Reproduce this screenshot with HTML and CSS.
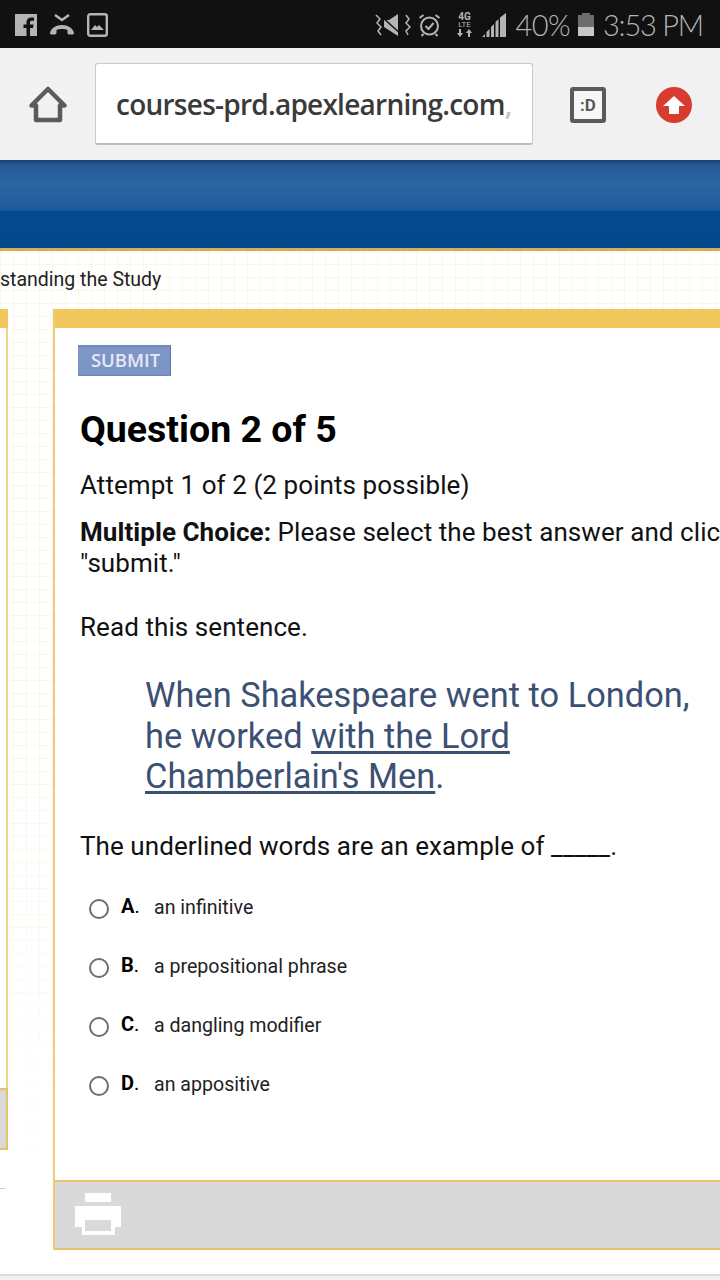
FILE: index.html
```html
<!DOCTYPE html>
<html>
  <head>
    <meta charset="utf-8">
    <title>Question 2 of 5</title>
    <link rel="stylesheet" href="styles.css">
  </head>
  <body>
    <div class="status-bar">
      <div class="status-left">
        <svg width="22" height="22" viewBox="0 0 22 22"><path fill="#b4b4b4" d="M0 0h22v22h-7v-8h3l.5-3.500H15V8.500c0-1 .5-1.700 1.800-1.700H19V3.600c-.5-.1-1.600-.2-2.800-.2-2.700 0-4.700 1.700-4.700 4.700v2.400H8.500V14h3v8H0z"/></svg>
        <svg width="24" height="22" viewBox="0 0 24 22"><path fill="none" stroke="#b4b4b4" stroke-width="2.500" d="M5 1l7 5 7-5"/><path fill="#b4b4b4" d="M0 19c1-5 6-8 12-8s11 3 12 8c0 1-1 1.500-2 1.500h-3c-1 0-1.500-1-1.500-2V16c-1.500-.8-3.500-1-5.500-1s-4 .2-5.500 1v2.500c0 1-.5 2-1.500 2H2c-1 0-2-.5-2-1.500z"/></svg>
        <svg class="gallery" width="21" height="24" viewBox="0 0 21 24"><rect x="1.200" y="1.200" width="18.600" height="21.600" rx="2" fill="none" stroke="#b4b4b4" stroke-width="2.400"/><path fill="#b4b4b4" d="M4 17l4-5 2 2 2-2 5 5z"/></svg>
      </div>
      <div class="status-right">
        <svg width="36" height="24" viewBox="0 0 36 24"><path fill="#b4b4b4" d="M9 7h5l9-6v22L9 14z"/><path stroke="#111" stroke-width="1.500" d="M7 4l20 18"/><path fill="none" stroke="#b4b4b4" stroke-width="1.500" d="M1 2l4 4-3 4 4 4-3 4 3 4M31 2l3 4-3 4 4 4-4 4 2 4"/></svg>
        <svg class="alarm" width="23" height="24" viewBox="0 0 22 24"><circle cx="11" cy="13" r="8.500" fill="none" stroke="#b4b4b4" stroke-width="2"/><path fill="none" stroke="#b4b4b4" stroke-width="2" d="M7 13l3 3 5-6M1 5l4-3M21 5l-4-3M5 21l-2 2M17 21l2 2"/></svg>
        <div class="net-type"><b>4G</b><b class="lte">LTE</b><svg width="15" height="8" viewBox="0 0 15 8"><path fill="#b4b4b4" d="M2 0h2v4h2L3 8 0 4h2zM11 8h2V4h2l-3-4-3 4h2z"/></svg></div>
        <svg class="signal" width="24" height="24" viewBox="0 0 24 24"><path fill="#b4b4b4" d="M0 24l3-3v3zM4.500 24v-5l3-3v8zM9 24V14l3-3v13zM13.500 24V9l3-3v18zM18 24V4.500L24 0v24z"/></svg>
        <span class="percent">40%</span>
        <div class="battery"><i></i></div>
        <span class="clock">3:53 PM</span>
      </div>
    </div>

    <div class="toolbar">
      <svg class="home" width="38" height="38" viewBox="0 0 38 38"><path fill="none" stroke="#5b5b5b" stroke-width="4.500" stroke-linejoin="round" d="M2.500 19.500L19 3l16.500 16.500H31V34H7V19.500z"/></svg>
      <div class="url-box"><span>courses-prd.apexlearning.com<em>,</em></span></div>
      <div class="reader">:D</div>
      <div class="upload"><svg width="24" height="24" viewBox="0 0 24 24"><path fill="#fff" d="M12 3l11 10h-6v8H7v-8H1z"/></svg></div>
    </div>

    <div class="banner"></div>

    <div class="page">
      <div class="crumb">standing the Study</div>
      <div class="columns">
        <div class="side">
          <div class="side-top"></div>
          <div class="side-body"></div>
          <div class="side-foot"></div>
          <div class="side-mark"></div>
        </div>
        <div class="main">
          <div class="main-top"></div>
          <div class="content">
            <div class="submit">SUBMIT</div>
            <h1>Question 2 of 5</h1>
            <p class="attempt">Attempt 1 of 2 (2 points possible)</p>
            <p class="prompt"><b>Multiple Choice:</b> Please select the best answer and click<br>"submit."</p>
            <p class="read">Read this sentence.</p>
            <p class="quote">When Shakespeare went to London,<br>he worked <u>with the Lord<br>Chamberlain's Men</u>.</p>
            <p class="ask">The underlined words are an example of _____.</p>
            <ul class="options">
              <li><i class="radio"></i><b>A<em>.</em></b><span>an infinitive</span></li>
              <li><i class="radio"></i><b>B<em>.</em></b><span>a prepositional phrase</span></li>
              <li><i class="radio"></i><b>C<em>.</em></b><span>a dangling modifier</span></li>
              <li><i class="radio"></i><b>D<em>.</em></b><span>an appositive</span></li>
            </ul>
          </div>
          <div class="main-foot">
            <svg width="46" height="42" viewBox="0 0 46 42"><path fill="#fff" d="M10 0h26v9H10zM0 13h46v21h-6v8H7v-8H0z"/><path fill="#d9d9d9" d="M10 27h26v11H10z"/></svg>
          </div>
        </div>
      </div>
      <div class="page-end"></div>
    </div>
  </body>
</html>
```

FILE: styles.css
```css
* {margin: 0; padding: 0; box-sizing: border-box;}
ul {list-style: none;}
html, body {height: 100%;}
body {
  width: 720px;
  height: 1280px;
  overflow: hidden;
  font-family: Roboto, "Liberation Sans", sans-serif;
  background: #fff;
  color: #111;
}

/* status bar */
.status-bar {
  height: 48px;
  background: #111;
  color: #b4b4b4;
  display: flex;
  align-items: center;
  justify-content: space-between;
  padding: 1px 17px 0 15px;
}
.status-left {display: flex; align-items: center; gap: 13px;}
.status-right {display: flex; align-items: center;}
.alarm {margin-left: 7px;}
.net-type {
  width: 16px;
  margin-left: 16px;
  font-size: 10px;
  line-height: 8px;
  text-align: center;
  display: flex;
  flex-direction: column;
  align-items: center;
}
.net-type .lte {font-size: 8px; font-weight: 400;}
.signal {margin-left: 9px;}
.percent {font: 300 29px/1 Lato, sans-serif; margin-left: 10px; letter-spacing: -.6px;}
.battery {
  width: 16px;
  height: 21px;
  margin: 2px 0 0 8px;
  background: #6d6d6d;
  position: relative;
}
.battery::before {content: ""; position: absolute; left: 4px; top: -2px; width: 8px; height: 2px; background: #6d6d6d;}
.battery i {position: absolute; left: 0; right: 0; bottom: 0; height: 9px; background: #c8c8c8;}
.clock {font: 300 29px/1 Lato, sans-serif; margin-left: 9px; letter-spacing: -1.200px;}

/* browser toolbar */
.toolbar {
  height: 112px;
  background: #f1f1f1;
  display: flex;
  align-items: center;
  padding: 0 28px 0 29px;
}
.home {flex: none; margin-top: 2px;}
.url-box {
  width: 438px;
  height: 82px;
  margin: 0 0 0 28px;
  background: #fff;
  border: 1px solid #c9c9c9;
  border-bottom: 2px solid #bdbdbd;
  border-radius: 3px;
  display: flex;
  align-items: center;
  padding: 0 19px 0 20px;
  overflow: hidden;
}
.url-box span {
  font: 600 28px/1 "Open Sans", sans-serif;
  letter-spacing: -.75px;
  color: #3a3a3a;
  white-space: nowrap;
}
.url-box em {font-style: normal; color: #c4c4c4;}
.reader {
  width: 36px;
  height: 36px;
  margin: 2px 0 0 37px;
  border: 4px solid #5b5b5b;
  border-radius: 3px;
  background: #f7f7f7;
  color: #5b5b5b;
  font: 700 17px/28px Roboto, sans-serif;
  text-align: center;
}
.upload {
  width: 36px;
  height: 36px;
  margin: 2px 0 0 50px;
  border-radius: 50%;
  background: #d83c2e;
  display: flex;
  align-items: center;
  justify-content: center;
}

/* blue site banner */
.banner {
  height: 91px;
  border-bottom: 3px solid #cfae58;
  background: linear-gradient(to bottom, #183f70 0, #245a94 5px, #2b66a2 24px, #1f5b9b 50px, #044a90 51px, #03478c 86px);
}

/* page with graph paper background, it fades out towards the bottom */
.page {
  height: 1029px;
  background-color: #fff;
  background-image:
    linear-gradient(to bottom, rgba(255,255,255,0) 50%, #fff 95%),
    linear-gradient(to right, #fcf6e6 1px, transparent 1px),
    linear-gradient(to bottom, #fcf6e6 1px, transparent 1px);
  background-size: 100% 100%, 13px 13px, 13px 13px;
  display: flex;
  flex-direction: column;
}
.crumb {
  height: 58px;
  padding-top: 17px;
  font-size: 19.500px;
  line-height: 24px;
  color: #222;
}
.columns {display: flex; height: 941px; gap: 45px;}

.side {width: 8px; flex: none; display: flex; flex-direction: column;}
.side-top {height: 19px; background: #f2c75c;}
.side-body {height: 760px; border-right: 2px solid #efd58c; background: #fff;}
.side-foot {height: 62px; background: #d9d9d9; border: 2px solid #e5c26c; border-left: 0;}
.side-mark {width: 5px; height: 1px; margin-top: 38px; background: #ccc;}

.main {
  flex: 1;
  min-width: 0;
  overflow: hidden;
  display: flex;
  flex-direction: column;
  background: #fff;
  border-left: 2px solid #eccb74;
}
.main-top {height: 19px; flex: none; background: #f2c75c; margin-left: -2px;}
.content {flex: 1; padding: 17px 0 0 25px; white-space: nowrap;}

.submit {
  width: 93px;
  height: 31px;
  margin-left: -2px;
  padding-left: 3px;
  background: linear-gradient(to bottom, #6f89bb 0, #7e96c8 4px, #7b94c6 100%);
  border-right: 1px solid #5f7aa8;
  border-bottom: 1px solid #6c86b4;
  color: #e4e9f3;
  font: 600 18.500px/29px "Open Sans", sans-serif;
  text-align: center;
}
h1 {font-size: 37.500px; line-height: 44px; font-weight: 700; color: #000; margin-top: 31px;}
.attempt, .prompt, .read, .ask {font-size: 26px; line-height: 31px; letter-spacing: .07px;}
.attempt {margin-top: 19px;}
.prompt {margin-top: 16px;}
.read {margin-top: 33px;}
.quote {
  font-size: 34.400px;
  line-height: 40.500px;
  color: #3b5072;
  margin: 32px 0 0 65px;
}
.quote u {text-decoration-thickness: 3px; text-underline-offset: 3px;}
.ask {margin-top: 34px;}

.options {margin-top: 16px;}
.options li {
  height: 59px;
  display: flex;
  align-items: center;
  font-size: 19.600px;
  color: #222;
}
.radio {
  width: 20px;
  height: 20px;
  margin: 4px 0 0 9px;
  border: 2px solid #6e6e6e;
  border-radius: 50%;
  background: #fff;
  flex: none;
}
.options b {width: 33px; margin: -3px 0 0 12px; color: #000; font-size: 20px;}
.options em {font-style: normal; font-weight: 400;}

.main-foot {
  height: 70px;
  flex: none;
  background: #d9d9d9;
  border-top: 2px solid #e5c26c;
  border-bottom: 2px solid #e5c26c;
  padding: 11px 0 0 20px;
}
.main-foot svg {display: block;}

.page-end {height: 6px; background: #f1f1f1; border-top: 2px solid #dcdcdc; margin-top: 24px;}
```
